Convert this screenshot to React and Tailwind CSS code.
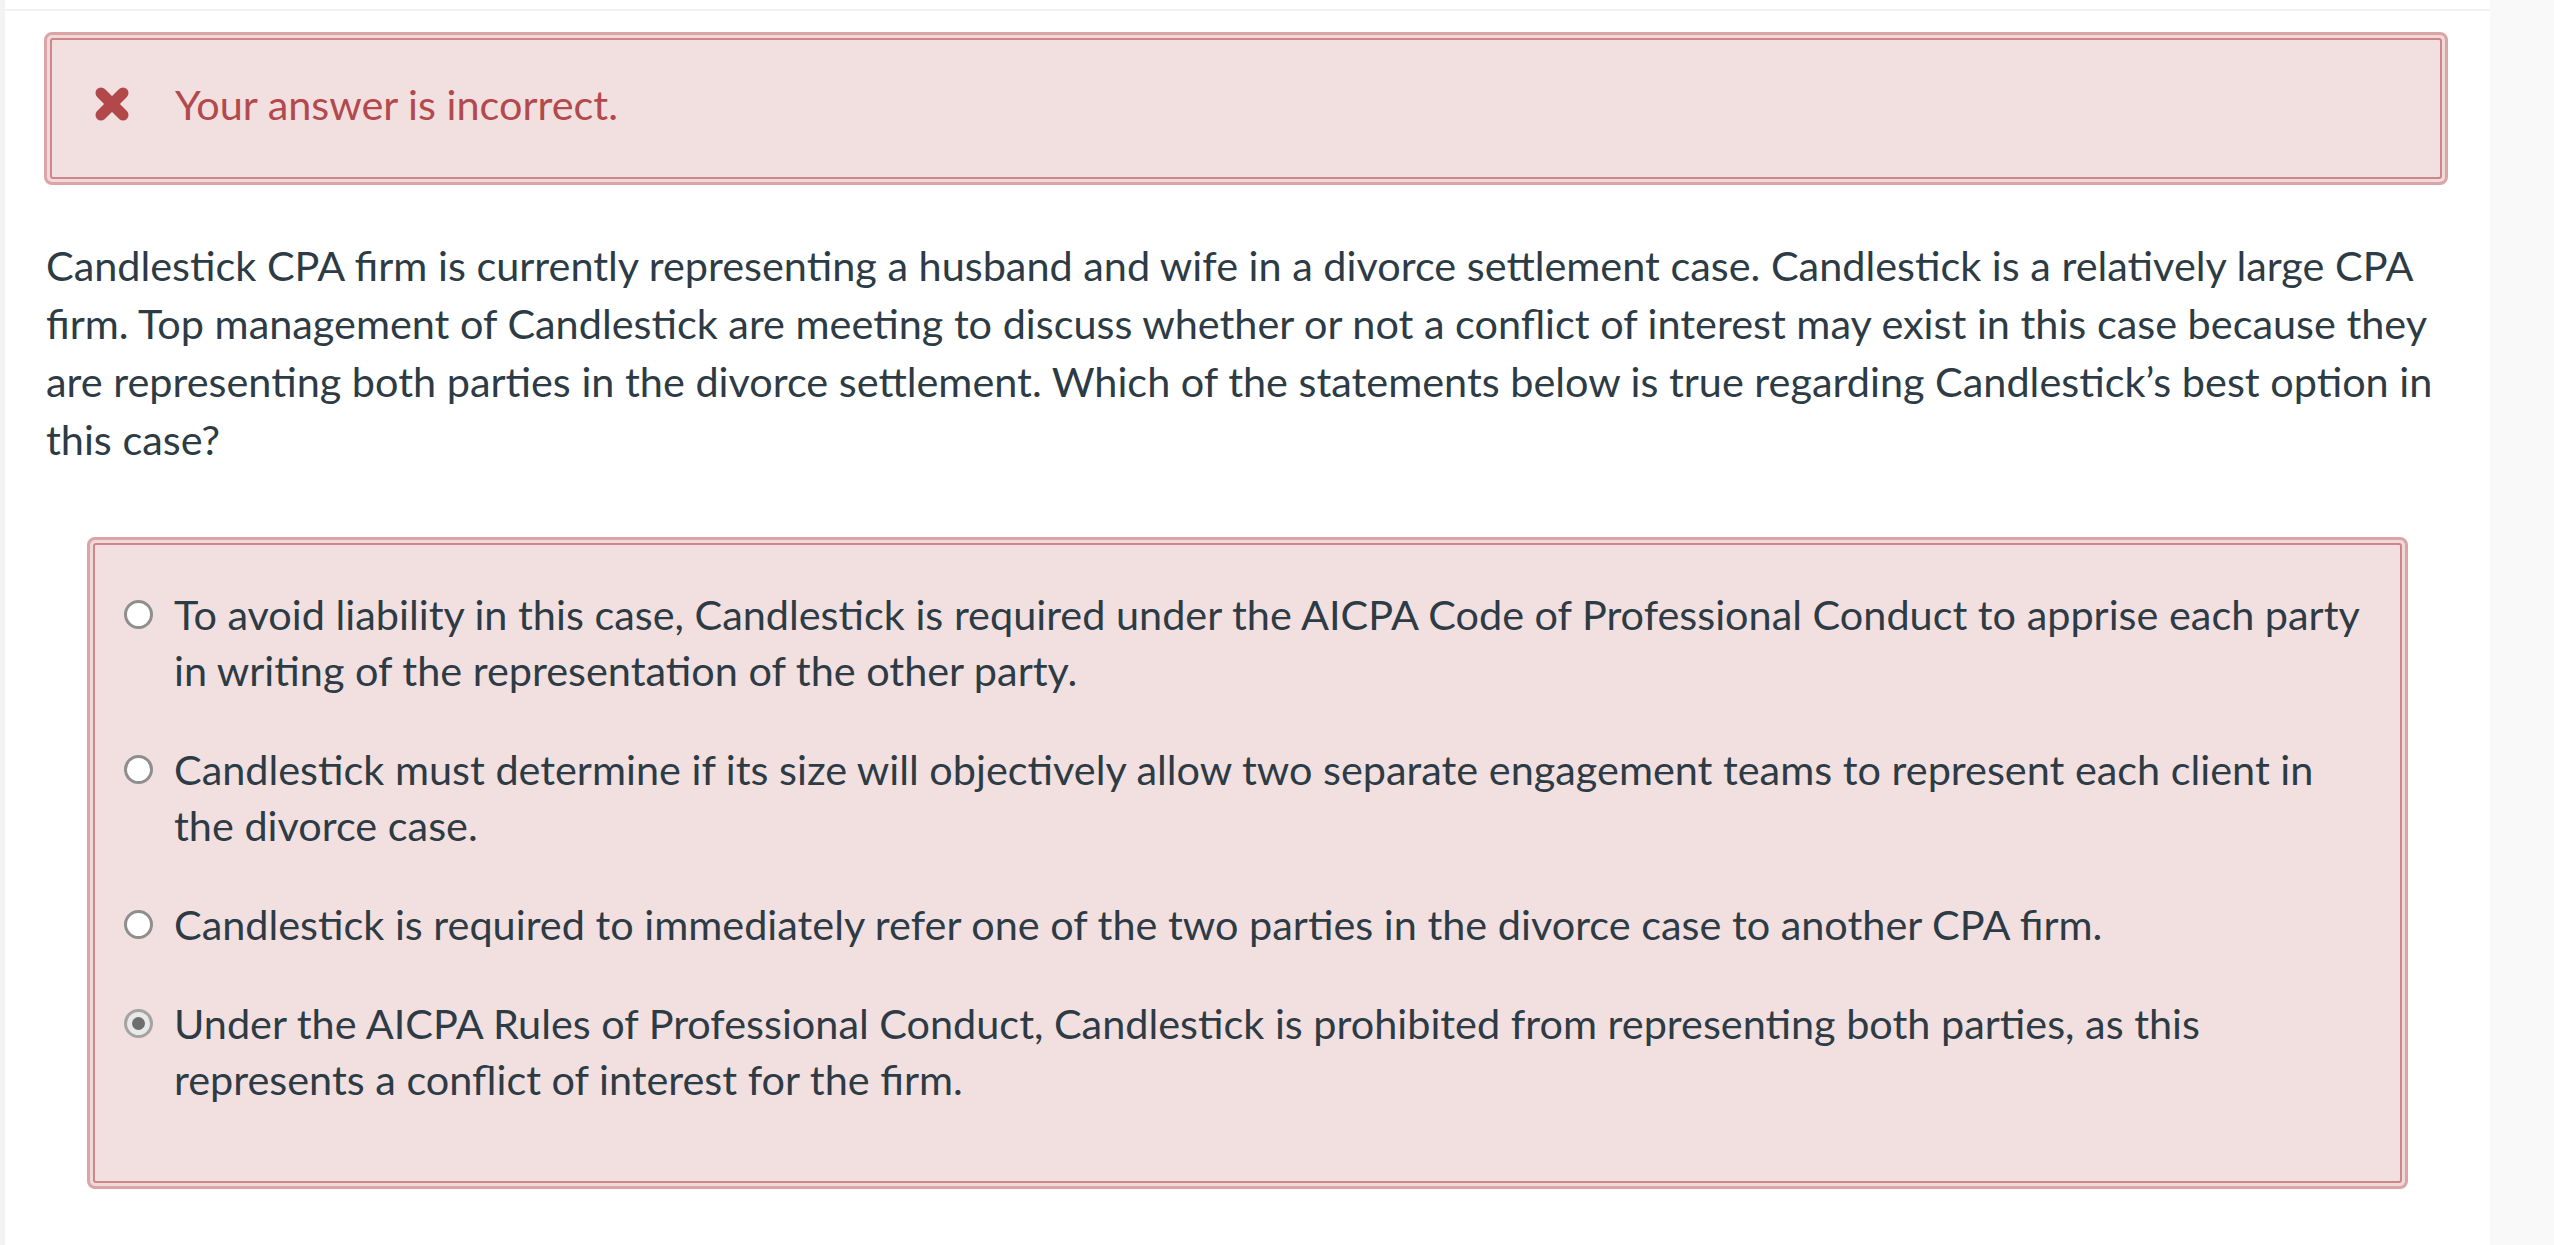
import React from "react";

const options = [
  {
    text: "To avoid liability in this case, Candlestick is required under the AICPA Code of Professional Conduct to apprise each party in writing of the representation of the other party.",
    checked: false,
  },
  {
    text: "Candlestick must determine if its size will objectively allow two separate engagement teams to represent each client in the divorce case.",
    checked: false,
  },
  {
    text: "Candlestick is required to immediately refer one of the two parties in the divorce case to another CPA firm.",
    checked: false,
  },
  {
    text: "Under the AICPA Rules of Professional Conduct, Candlestick is prohibited from representing both parties, as this represents a conflict of interest for the firm.",
    checked: true,
  },
];

function Radio({ checked }) {
  if (checked) {
    return (
      <span className="w-[29px] h-[29px] rounded-full border-[3px] border-[#a3a3a3] bg-[#e9e9e9] flex items-center justify-center shrink-0">
        <span className="w-[13px] h-[13px] rounded-full bg-[#6e6e6e]" />
      </span>
    );
  }
  return <span className="w-[29px] h-[29px] rounded-full border-[3px] border-[#8e8e8e] bg-white shrink-0" />;
}

function CrossIcon() {
  return (
    <svg width="38" height="36" viewBox="0 0 38 36" className="shrink-0">
      <path d="M8 7 L30 29 M30 7 L8 29" stroke="#b3484b" strokeWidth="11" strokeLinecap="round" />
    </svg>
  );
}

export default function App() {
  return (
    <div className="w-[2554px] h-[1245px] bg-white flex font-['Lato',sans-serif] text-[#2d3b45] overflow-hidden">
      <div className="w-[5px] bg-[#f3f3f3]" />

      <main className="w-[2485px] flex flex-col">
        <div className="mt-[9px] h-[2px] bg-[#f1f1f1]" />

        <div className="ml-[39px] mt-[21px] w-[2404px] h-[153px] rounded-[8px] border-[3px] border-[#dba4a6] p-[3px] bg-[#f1d9da]">
          <div className="h-full rounded-[3px] border-[2px] border-[#cd8689] bg-[#f2dfe0] flex items-center pl-[41px] pb-[10px]">
            <CrossIcon />
            <span className="ml-[44px] text-[41.4px] leading-[58px] text-[#b24a4d]">Your answer is incorrect.</span>
          </div>
        </div>

        <p className="ml-[41px] mt-[51px] w-[2400px] text-[41.4px] leading-[58px]">
          Candlestick CPA firm is currently representing a husband and wife in a divorce settlement case. Candlestick is a relatively large CPA firm. Top management of Candlestick are meeting to discuss whether or not a conflict of interest may exist in this case because they are representing both parties in the divorce settlement. Which of the statements below is true regarding Candlestick’s best option in this case?
        </p>

        <div className="ml-[82px] mt-[69px] w-[2321px] h-[652px] rounded-[8px] border-[3px] border-[#dba4a6] p-[3px] bg-[#f1d9da]">
          <div className="h-full rounded-[3px] border-[2px] border-[#cd8689] bg-[#f2dfe0] pl-[29px] pt-[41px] flex flex-col gap-[43px]">
            {options.map((o, i) => (
              <label key={i} className="flex items-start gap-[21px]">
                <span className="h-[56px] flex items-center">
                  <Radio checked={o.checked} />
                </span>
                <span className="w-[2195px] text-[41.4px] leading-[56px]">{o.text}</span>
              </label>
            ))}
          </div>
        </div>
      </main>

      <div className="flex-1 bg-[#f9f9f9]" />
    </div>
  );
}
